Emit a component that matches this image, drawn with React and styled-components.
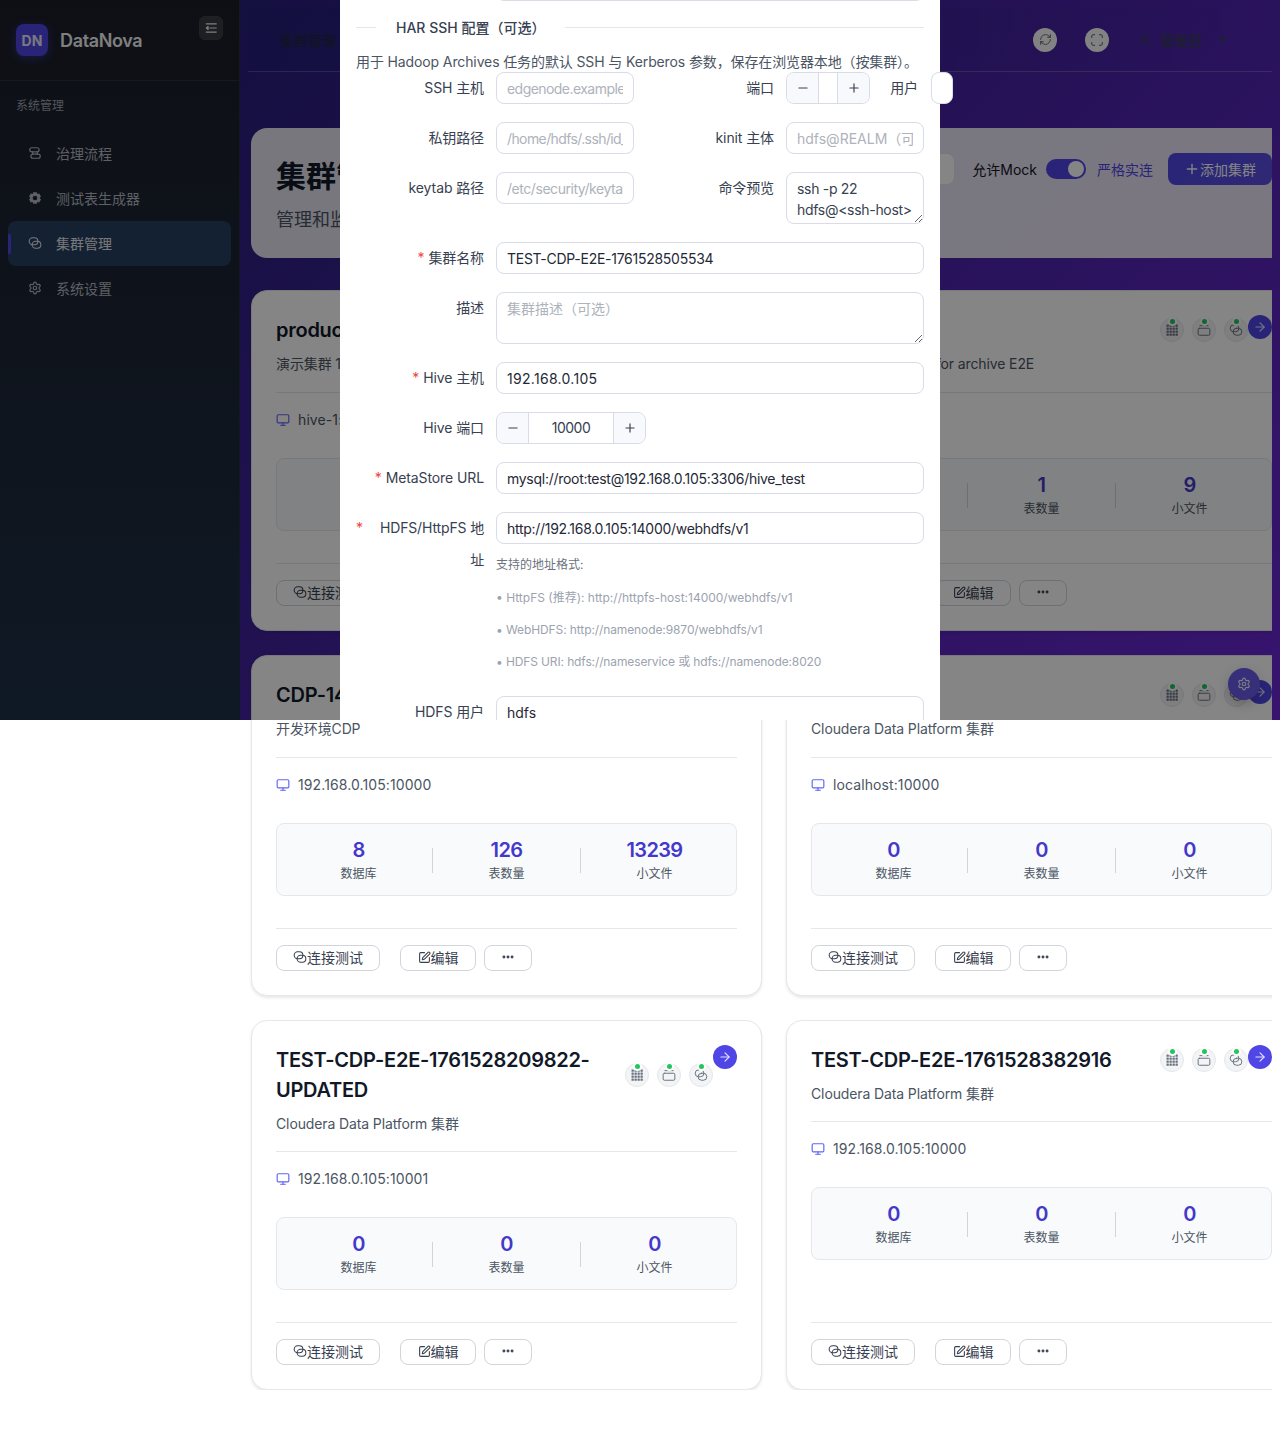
import React from 'react';
import styled, { createGlobalStyle } from 'styled-components';
import { Monitor, ArrowRight, Plus, Minus, RefreshCw, Maximize, User, Settings, SquarePen, Ellipsis } from 'lucide-react';

const Global = createGlobalStyle`
  html, body { margin: 0; padding: 0; background: #fff; }
  body {
    font-family: Inter, "Noto Sans CJK SC", sans-serif;
    color: #111827;
  }
  * { box-sizing: border-box; }
`;

const Page = styled.div`
  position: relative;
  width: 1280px;
  height: 1454px;
  overflow: hidden;
  display: flex;
  align-items: flex-start;
  background: #fff;
  &::before {
    content: '';
    position: absolute;
    left: 0;
    top: 0;
    width: 1280px;
    height: 720px;
    background: linear-gradient(135deg, #1e1e6e 0%, #892cfc 100%) 0 0 / 1280px 1454px no-repeat;
  }
`;

const Sidebar = styled.aside`
  position: relative;
  width: 240px;
  height: 720px;
  flex: none;
  background: linear-gradient(180deg, #1b1e28 0%, #1e3048 100%);
  border-right: 1px solid #2a2f40;
`;
const Brand = styled.div`
  height: 81px;
  padding: 24px 16px 0;
  display: flex;
  align-items: flex-start;
  gap: 12px;
  border-bottom: 1px solid #2b303f;
`;
const Logo = styled.div`
  width: 32px;
  height: 32px;
  border-radius: 8px;
  background: #4f46e5;
  box-shadow: 0 2px 10px rgba(79, 70, 229, .45);
  color: #e8e8f5;
  font-size: 14px;
  font-weight: 700;
  display: flex;
  align-items: center;
  justify-content: center;
`;
const BrandName = styled.div`
  padding-top: 1px;
  font-size: 18px;
  line-height: 32px;
  font-weight: 600;
  letter-spacing: -0.35px;
  color: #f3f4f6;
  flex: 1;
`;
const Collapse = styled.button`
  width: 24px;
  height: 24px;
  margin: -8px 0 0;
  padding: 0;
  border-radius: 6px;
  border: 1px solid #3d404b;
  background: #3a3c44;
  color: #f3f4f6;
  display: flex;
  align-items: center;
  justify-content: center;
`;
const MenuGroup = styled.div`
  padding: 16px 16px 16px;
  font-size: 12px;
  line-height: 18px;
  color: #9ca3af;
`;
const Menu = styled.nav`
  padding: 0 8px;
  display: flex;
  flex-direction: column;
`;
const MenuItem = styled.div`
  position: relative;
  height: 45px;
  padding: 0 0 2px 20px;
  border-radius: 8px;
  display: flex;
  align-items: center;
  gap: 14px;
  font-size: 14px;
  color: ${p => (p.$active ? '#e5e7eb' : '#b4b8c2')};
  background: ${p => (p.$active ? '#284060' : 'transparent')};
  ${p => p.$active && `&::before {
    content: '';
    position: absolute;
    left: 0; top: 13px;
    width: 3px; height: 20px;
    border-radius: 0 2px 2px 0;
    background: #4f46e5;
  }`}
`;

const Main = styled.main`
  position: relative;
  width: 1024px;
  margin-left: 8px;
  padding-top: 8px;
  overflow: hidden;
  flex: none;
`;
const TopBar = styled.header`
  height: 64px;
  padding: 0 46px 0 32px;
  display: flex;
  align-items: center;
  border-bottom: 1px solid rgba(255, 255, 255, .2);
  background: linear-gradient(90deg, rgba(30, 30, 120, .35), rgba(30, 30, 120, 0));
`;
const Crumb = styled.div`
  flex: 1;
  font-size: 14px;
  color: #1f2937;
`;
const RoundBtn = styled.div`
  width: 24px;
  height: 24px;
  margin-right: 28px;
  border-radius: 50%;
  background: #fafafa;
  color: #4b5563;
  display: flex;
  align-items: center;
  justify-content: center;
`;
const UserBox = styled.div`
  display: flex;
  align-items: center;
  gap: 8px;
  font-size: 14px;
  font-weight: 500;
  color: #374151;
  margin-left: 1px;
`;
const Caret = styled.span`
  width: 0;
  height: 0;
  margin-left: 8px;
  border-left: 4px solid transparent;
  border-right: 4px solid transparent;
  border-top: 5px solid #374151;
`;

const Content = styled.div`
  width: 1046px;
  margin-left: 3px;
  padding-top: 56px;
`;
const Hero = styled.section`
  height: 130px;
  margin-bottom: 32px;
  padding: 25px;
  border-radius: 16px;
  background: rgba(255, 255, 255, .88);
  display: flex;
  justify-content: space-between;
`;
const HeroTitle = styled.h1`
  margin: 1px 0 0;
  font-size: 30px;
  line-height: 44px;
  font-weight: 700;
  color: #111827;
`;
const HeroSub = styled.p`
  margin: 9px 0 0;
  font-size: 18px;
  line-height: 26px;
  color: #4b5563;
`;
const HeroTools = styled.div`
  height: 32px;
  display: flex;
  align-items: center;
  font-size: 14px;
`;
const Search = styled.div`
  width: 200px;
  height: 32px;
  margin-right: 17px;
  border: 1px solid #e5e7eb;
  border-radius: 8px;
  background: #fff;
`;
const Toggle = styled.div`
  width: 40px;
  height: 20px;
  margin: 0 11px 0 9px;
  padding: 2px;
  border-radius: 10px;
  background: #4f46e5;
  display: flex;
  justify-content: flex-end;
`;
const Knob = styled.span`
  width: 16px;
  height: 16px;
  border-radius: 50%;
  background: #fff;
`;
const Strict = styled.span`
  color: #4f46e5;
  margin-right: 15px;
`;
const AddBtn = styled.div`
  width: 104px;
  height: 32px;
  border-radius: 8px;
  background: linear-gradient(135deg, #4f46e5, #5a4fe0);
  color: #fff;
  font-size: 14px;
  display: flex;
  align-items: center;
  justify-content: center;
`;

const Grid = styled.div`
  display: grid;
  grid-template-columns: 511px 511px;
  gap: 24px;
`;
const Card = styled.article`
  position: relative;
  padding: 24px 24px 24px;
  border: 1px solid #e5e7eb;
  border-radius: 16px;
  background: #fff;
  box-shadow: 0 2px 3px rgba(0, 0, 0, .09);
  display: flex;
  flex-direction: column;
`;
const CardHead = styled.div`
  padding-right: 24px;
  display: flex;
  align-items: center;
  justify-content: space-between;
  gap: 16px;
`;
const CardTitle = styled.h3`
  margin: 0;
  font-size: 20px;
  line-height: 30px;
  font-weight: 600;
  letter-spacing: -0.26px;
  color: #111827;
  overflow-wrap: anywhere;
`;
const Services = styled.div`
  flex: none;
  display: flex;
  gap: 8px;
`;
const Service = styled.div`
  position: relative;
  width: 24px;
  height: 24px;
  border-radius: 50%;
  background: #f3f4f6;
  border: 1px solid #e5e7eb;
  color: #6b7280;
  display: flex;
  align-items: center;
  justify-content: center;
  &::after {
    content: '';
    position: absolute;
    top: 0;
    left: 9px;
    width: 5px;
    height: 5px;
    border-radius: 50%;
    background: #22c55e;
    box-shadow: 0 0 0 2px #fff;
  }
`;
const Go = styled.div`
  position: absolute;
  top: 24px;
  right: 24px;
  width: 24px;
  height: 24px;
  border-radius: 50%;
  background: #4f46e5;
  color: #e0e0ff;
  display: flex;
  align-items: center;
  justify-content: center;
`;
const Desc = styled.p`
  margin: 8px 0 0;
  padding-bottom: ${p => p.$pb}px;
  border-bottom: 1px solid #e5e7eb;
  font-size: 14px;
  line-height: 22px;
  letter-spacing: -0.12px;
  color: #4b5563;
`;
const Host = styled.div`
  margin-top: 16px;
  display: flex;
  align-items: center;
  gap: 8px;
  font-size: 14px;
  line-height: 22px;
  letter-spacing: .1px;
  color: #4b5563;
`;
const Stats = styled.div`
  height: 73px;
  margin-top: 27px;
  padding: 2px 8px 0;
  border: 1px solid #e5e7eb;
  border-radius: 8px;
  background: #f8fafc;
  display: flex;
  align-items: center;
`;
const Stat = styled.div`
  flex: 1;
  text-align: center;
`;
const StatNum = styled.div`
  font-size: 20px;
  line-height: 26px;
  font-weight: 600;
  letter-spacing: -0.6px;
  color: #4338ca;
`;
const StatLabel = styled.div`
  margin-top: 1px;
  font-size: 12px;
  line-height: 20px;
  color: #4b5563;
`;
const StatLine = styled.span`
  width: 1px;
  height: 25px;
  background: #d1d5db;
`;
const Actions = styled.div`
  margin-top: auto;
  padding-top: 16px;
  border-top: 1px solid #e5e7eb;
  display: flex;
  gap: 8px;
`;
const ActBtn = styled.div`
  width: ${p => p.$w}px;
  height: 26px;
  margin-right: ${p => p.$gap || 0}px;
  padding-bottom: 2px;
  border: 1px solid #d1d5db;
  border-radius: 8px;
  background: #fff;
  color: #374151;
  font-size: 14px;
  display: flex;
  align-items: center;
  justify-content: center;
`;
const Spacer = styled.div`
  height: 32px;
  flex: none;
`;

const Fab = styled.div`
  position: absolute;
  left: 1228px;
  top: 668px;
  width: 32px;
  height: 32px;
  border-radius: 50%;
  background: #6a5ae8;
  color: #f0f0ff;
  box-shadow: 0 4px 12px rgba(0, 0, 0, .2);
  display: flex;
  align-items: center;
  justify-content: center;
`;
const Mask = styled.div`
  position: absolute;
  left: 0;
  top: 0;
  width: 1280px;
  height: 720px;
  overflow: hidden;
  background: rgba(0, 0, 0, .48);
`;
const Modal = styled.div`
  position: absolute;
  left: 340px;
  top: -32px;
  width: 600px;
  min-height: 800px;
  padding: 0 16px;
  background: #fff;
  font-size: 14px;
  color: #374151;
`;
const Clipped = styled.div`
  height: 33px;
  margin-left: 140px;
  border: 1px solid #d9dbe7;
  border-radius: 8px;
`;
const Section = styled.div`
  height: 46px;
  display: flex;
  align-items: center;
  gap: 20px;
  margin-top: 3px;
  font-size: 14px;
  font-weight: 500;
  color: #374151;
  &::before {
    content: '';
    width: 20px;
    height: 1px;
    background: #e5e7eb;
  }
  &::after {
    content: '';
    flex: 1;
    height: 1px;
    background: #e5e7eb;
  }
`;
const Hint = styled.div`
  height: 24px;
  line-height: 24px;
  font-size: 14px;
  letter-spacing: -0.12px;
  white-space: nowrap;
  color: #4b5563;
`;
const Row = styled.div`
  display: flex;
  align-items: flex-start;
  margin-bottom: 18px;
  ${p => p.$first && 'margin-top: -2px;'}
`;
const Label = styled.label`
  flex: none;
  width: ${p => p.$w || 128}px;
  margin-right: ${p => p.$mr || 12}px;
  text-align: right;
  line-height: 32px;
  letter-spacing: -0.1px;
  color: #374151;
  ${p => p.$req && `&::before {
    content: '*';
    color: #ef4444;
    margin-right: 4px;
  }`}
`;
const WrapLabel = styled.label`
  flex: none;
  position: relative;
  width: 128px;
  margin-right: 12px;
  padding-left: 12px;
  text-align: right;
  line-height: 32px;
  letter-spacing: -0.15px;
  color: #374151;
  &::before {
    content: '*';
    position: absolute;
    left: 0;
    top: 0;
    color: #ef4444;
  }
`;
const Input = styled.input`
  flex: ${p => (p.$w ? 'none' : '1')};
  display: block;
  width: ${p => (p.$w ? `${p.$w}px` : '100%')};
  height: 32px;
  padding: 0 10px;
  border: 1px solid #d9dbe7;
  border-radius: 8px;
  background: #fff;
  font: inherit;
  letter-spacing: ${p => p.$ls || 0}px;
  color: #1f2937;
  outline: none;
  &::placeholder { color: #aeb2bb; opacity: 1; }
`;
const Area = styled.textarea`
  flex: ${p => (p.$w ? 'none' : '1')};
  display: block;
  width: ${p => (p.$w ? `${p.$w}px` : 'auto')};
  height: 52px;
  padding: 5px 10px;
  border: 1px solid #d9dbe7;
  border-radius: 8px;
  background: #fff;
  font: inherit;
  line-height: 21px;
  letter-spacing: ${p => p.$ls || 0}px;
  color: #374151;
  overflow: hidden;
  resize: vertical;
  outline: none;
  &::placeholder { color: #aeb2bb; opacity: 1; }
`;
const Stepper = styled.div`
  flex: none;
  width: ${p => p.$w}px;
  height: 32px;
  border: 1px solid #d9dbe7;
  border-radius: 8px;
  overflow: hidden;
  display: flex;
`;
const StepSide = styled.span`
  width: 32px;
  flex: none;
  background: #f8f9fc;
  color: #374151;
  display: flex;
  align-items: center;
  justify-content: center;
  ${p => (p.$end ? 'border-left' : 'border-right')}: 1px solid #d9dbe7;
`;
const StepValue = styled.span`
  flex: 1;
  text-align: center;
  line-height: 30px;
  letter-spacing: -0.5px;
  color: #374151;
`;
const FieldCol = styled.div`
  flex: 1;
`;
const Help = styled.div`
  margin-top: 4px;
  font-size: 12px;
  color: #6b7280;
  white-space: nowrap;
`;
const HelpLine = styled.div`
  height: ${p => (p.$head ? 34 : 32)}px;
  padding-top: ${p => (p.$head ? 1 : 0)}px;
  line-height: 32px;
  letter-spacing: ${p => p.$ls || 0}px;
  color: ${p => (p.$head ? '#6b7280' : '#9ca3af')};
`;

const Svg = ({ s = 14, children, w = 2 }) => (
  <svg width={s} height={s} viewBox="0 0 24 24" fill="none" stroke="currentColor" strokeWidth={w} strokeLinecap="round" strokeLinejoin="round">{children}</svg>
);
const LinkIcon = ({ s = 14, w = 2 }) => (
  <Svg s={s} w={w}>
    <rect x="2" y="3" width="15" height="12" rx="6" />
    <rect x="7" y="9" width="15" height="12" rx="6" />
  </Svg>
);
const FlowIcon = () => (
  <Svg s={14} w={2}>
    <rect x="3" y="3" width="16" height="7" rx="3.5" />
    <rect x="5" y="14" width="16" height="7" rx="3.5" />
    <path d="M8 10v4M16 10v4" />
  </Svg>
);
const GearFill = () => (
  <svg width="14" height="14" viewBox="0 0 24 24">
    <path fill="currentColor" fillRule="evenodd" d="M9 2h6l1 3.200 3.200-.8 3 5.200-2.300 2.400 2.300 2.400-3 5.200-3.200-.8L15 22H9l-1-3.200-3.200.8-3-5.200L4.100 12 1.800 9.600l3-5.200 3.200.8zM12 8a4 4 0 1 0 0 8 4 4 0 0 0 0-8z" />
  </svg>
);
const ListFold = () => (
  <Svg s={14} w={2}>
    <path d="M4 5h17M10 12h11M4 19h17M4 12l3-2.500v5z" />
  </Svg>
);
const DotsGrid = () => (
  <svg width="14" height="14" viewBox="0 0 14 14" fill="currentColor">
    {[1.5, 4.5, 7.5, 10.5].map(y => [1.5, 4.5, 7.5, 10.5].map(x => <rect key={`${x}-${y}`} x={x} y={y} width="2.300" height="2.300" rx=".4" />))}
  </svg>
);
const BoxIcon = () => (
  <Svg s={14} w={1.7}>
    <rect x="2" y="9" width="20" height="12" rx="2" />
    <path d="M5 4.500h14" />
  </Svg>
);

const ClusterCard = ({ title, desc, host, stats, pb = 17 }) => (
  <Card>
    <CardHead>
      <CardTitle>{title}</CardTitle>
      <Services>
        <Service><DotsGrid /></Service>
        <Service><BoxIcon /></Service>
        <Service><LinkIcon s={14} w={1.7} /></Service>
      </Services>
    </CardHead>
    <Go><ArrowRight size={14} /></Go>
    <Desc $pb={pb}>{desc}</Desc>
    <Host><Monitor size={14} color="#6366f1" />{host}</Host>
    <Stats>
      <Stat><StatNum>{stats[0]}</StatNum><StatLabel>数据库</StatLabel></Stat>
      <StatLine />
      <Stat><StatNum>{stats[1]}</StatNum><StatLabel>表数量</StatLabel></Stat>
      <StatLine />
      <Stat><StatNum>{stats[2]}</StatNum><StatLabel>小文件</StatLabel></Stat>
    </Stats>
    <Spacer />
    <Actions>
      <ActBtn $w={104} $gap={12}><LinkIcon s={14} w={1.8} />连接测试</ActBtn>
      <ActBtn $w={76}><SquarePen size={13} />编辑</ActBtn>
      <ActBtn $w={48}><Ellipsis size={14} strokeWidth={3} /></ActBtn>
    </Actions>
  </Card>
);

export default function App() {
  return (
    <Page>
      <Global />
      <Sidebar>
        <Brand>
          <Logo>DN</Logo>
          <BrandName>DataNova</BrandName>
          <Collapse><ListFold /></Collapse>
        </Brand>
        <MenuGroup>系统管理</MenuGroup>
        <Menu>
          <MenuItem><FlowIcon />治理流程</MenuItem>
          <MenuItem><GearFill />测试表生成器</MenuItem>
          <MenuItem $active><LinkIcon s={14} w={1.8} />集群管理</MenuItem>
          <MenuItem><Settings size={14} />系统设置</MenuItem>
        </Menu>
      </Sidebar>
      <Main>
        <TopBar>
          <Crumb>集群管理</Crumb>
          <RoundBtn><RefreshCw size={13} strokeWidth={1.5} /></RoundBtn>
          <RoundBtn><Maximize size={14} strokeWidth={1.5} /></RoundBtn>
          <UserBox><User size={14} />管理员<Caret /></UserBox>
        </TopBar>
        <Content>
          <Hero>
            <div>
              <HeroTitle>集群管理</HeroTitle>
              <HeroSub>管理和监控所有 Hive 集群</HeroSub>
            </div>
            <HeroTools>
              <Search />
              允许Mock
              <Toggle><Knob /></Toggle>
              <Strict>严格实连</Strict>
              <AddBtn><Plus size={16} />添加集群</AddBtn>
            </HeroTools>
          </Hero>
          <Grid>
            <ClusterCard title="production" desc="演示集群 1" host="hive-1:10000" stats={[3, 24, 180]} />
            <ClusterCard title="archive-test" desc="A test cluster used for archive E2E" host="localhost:10000" stats={[1, 1, 9]} />
            <ClusterCard title="CDP-14" desc="开发环境CDP" host="192.168.0.105:10000" stats={[8, 126, 13239]} />
            <ClusterCard title="CDP-local" desc="Cloudera Data Platform 集群" host="localhost:10000" stats={[0, 0, 0]} />
            <ClusterCard pb={16} title="TEST-CDP-E2E-1761528209822-UPDATED" desc="Cloudera Data Platform 集群" host="192.168.0.105:10001" stats={[0, 0, 0]} />
            <ClusterCard pb={16} title="TEST-CDP-E2E-1761528382916" desc="Cloudera Data Platform 集群" host="192.168.0.105:10000" stats={[0, 0, 0]} />
          </Grid>
        </Content>
      </Main>
      <Fab><Settings size={14} /></Fab>
      <Mask>
        <Modal>
          <Clipped />
          <Section>HAR SSH 配置（可选）</Section>
          <Hint>用于 Hadoop Archives 任务的默认 SSH 与 Kerberos 参数，保存在浏览器本地（按集群）。</Hint>
          <Row $first>
            <Label>SSH 主机</Label>
            <Input $w={138} $ls={-0.55} readOnly placeholder="edgenode.example.com" />
            <Label $w={140}>端口</Label>
            <Stepper $w={84}>
              <StepSide><Minus size={14} /></StepSide>
              <StepValue />
              <StepSide $end><Plus size={14} /></StepSide>
            </Stepper>
            <Label $w={48} $mr={13}>用户</Label>
            <Input $w={22} readOnly />
          </Row>
          <Row>
            <Label>私钥路径</Label>
            <Input $w={138} $ls={-0.6} readOnly placeholder="/home/hdfs/.ssh/id_rsa" />
            <Label $w={140}>kinit 主体</Label>
            <Input $w={138} readOnly placeholder="hdfs@REALM（可选）" />
          </Row>
          <Row>
            <Label>keytab 路径</Label>
            <Input $w={138} $ls={-0.45} readOnly placeholder="/etc/security/keytabs/hdfs.keytab" />
            <Label $w={140}>命令预览</Label>
            <Area $w={138} $ls={-0.3} wrap="off" readOnly defaultValue={'ssh -p 22\nhdfs@<ssh-host>'} />
          </Row>
          <Row>
            <Label $req>集群名称</Label>
            <Input $ls={-0.27} readOnly defaultValue="TEST-CDP-E2E-1761528505534" />
          </Row>
          <Row>
            <Label>描述</Label>
            <Area readOnly placeholder="集群描述（可选）" />
          </Row>
          <Row>
            <Label $req>Hive 主机</Label>
            <Input $ls={0.3} readOnly defaultValue="192.168.0.105" />
          </Row>
          <Row>
            <Label>Hive 端口</Label>
            <Stepper $w={150}>
              <StepSide><Minus size={14} /></StepSide>
              <StepValue>10000</StepValue>
              <StepSide $end><Plus size={14} /></StepSide>
            </Stepper>
          </Row>
          <Row>
            <Label $req>MetaStore URL</Label>
            <Input $ls={-0.28} readOnly defaultValue="mysql://root:test@192.168.0.105:3306/hive_test" />
          </Row>
          <Row>
            <WrapLabel>HDFS/HttpFS 地址</WrapLabel>
            <FieldCol>
              <Input $ls={-0.29} readOnly defaultValue="http://192.168.0.105:14000/webhdfs/v1" />
              <Help>
                <HelpLine $head>支持的地址格式:</HelpLine>
                <HelpLine>• HttpFS (推荐): http://httpfs-host:14000/webhdfs/v1</HelpLine>
                <HelpLine $ls={-0.1}>• WebHDFS: http://namenode:9870/webhdfs/v1</HelpLine>
                <HelpLine $ls={-0.12}>• HDFS URI: hdfs://nameservice 或 hdfs://namenode:8020</HelpLine>
              </Help>
            </FieldCol>
          </Row>
          <Row>
            <Label>HDFS 用户</Label>
            <Input readOnly defaultValue="hdfs" />
          </Row>
        </Modal>
      </Mask>
    </Page>
  );
}
